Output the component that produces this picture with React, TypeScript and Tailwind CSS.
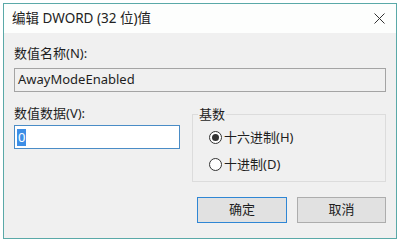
import React from "react";

const font = { fontFamily: '"Segoe UI", "Noto Sans", "Noto Sans CJK SC", sans-serif' };

export default function App() {
  return (
    <div className="w-[401px] h-[241px] bg-white pl-[3px] pt-[3px] text-[#1e1e1e]" style={font}>
      <div className="w-[394px] h-[236px] border border-[#5aa9a8] flex flex-col bg-[#f0f0f0]">
        <div className="h-[29px] bg-[#fdfefd] flex items-center justify-between pl-[8px] pr-[10px]">
          <span className="text-[13.5px] leading-none text-[#222]">编辑 DWORD (32 位)值</span>
          <svg width="11" height="11" viewBox="0 0 11 11" className="mr-[1px]">
            <path d="M0.5 0.5 L10.5 10.5 M10.5 0.5 L0.5 10.5" stroke="#333" strokeWidth="1" />
          </svg>
        </div>
        <div className="flex flex-col px-[10px] pt-[12px]">
          <div className="text-[13px] leading-[16px]">数值名称(N):</div>
          <div className="mt-[7px] h-[24px] border border-[#a4a4a4] bg-[#f0f0f0] flex items-center pl-[3px] text-[13px]">
            AwayModeEnabled
          </div>
          <div className="grid grid-cols-[166px_194px] gap-x-[12px] mt-[13px]">
            <div className="flex flex-col">
              <div className="text-[13px] leading-[16px]">数值数据(V):</div>
              <div className="mt-[4px] h-[24px] border border-[#4a8cc6] bg-white flex items-center pl-[2px]">
                <span className="bg-[#3d8ee6] text-white text-[13px] leading-[17px] px-[1px]">0</span>
              </div>
            </div>
            <fieldset className="border border-[#dcdcdc] h-[76px] mt-[1px] pl-[16px] pr-2">
              <legend className="text-[13px] leading-[16px] -ml-[11px] px-[1px]">基数</legend>
              <div className="flex flex-col gap-[11px] mt-[7px]">
                <label className="flex items-center gap-[2px] text-[13px] leading-[16px]">
                  <span className="w-[13px] h-[13px] rounded-full border border-[#333] flex items-center justify-center bg-white">
                    <span className="w-[7px] h-[7px] rounded-full bg-[#333]" />
                  </span>
                  十六进制(H)
                </label>
                <label className="flex items-center gap-[2px] text-[13px] leading-[16px]">
                  <span className="w-[13px] h-[13px] rounded-full border border-[#333] bg-white" />
                  十进制(D)
                </label>
              </div>
            </fieldset>
          </div>
          <div className="flex justify-end gap-[10px] mt-[15px]">
            <button className="w-[90px] h-[26px] border border-[#2f86d4] bg-[#e1e1e1] text-[13px]">确定</button>
            <button className="w-[89px] h-[26px] border border-[#adadad] bg-[#e1e1e1] text-[13px]">取消</button>
          </div>
        </div>
      </div>
    </div>
  );
}
